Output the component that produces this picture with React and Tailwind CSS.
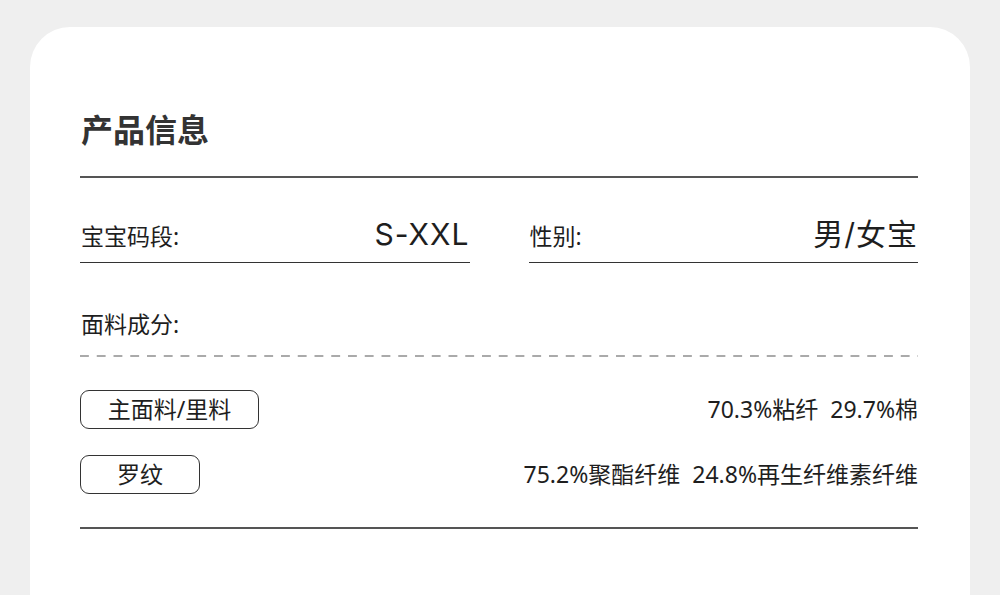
const font = "font-['Noto_Sans','Noto_Sans_CJK_SC',sans-serif]"

const Field = ({ label, value }) => (
  <div className="flex items-baseline justify-between border-b border-[#333] pb-[13px]">
    <span className="ml-px text-[23px] leading-none text-[#1e1e1e]">{label}</span>
    <span className="font-['Inter','Noto_Sans_CJK_SC',sans-serif] text-[30px] leading-none tracking-[1px] text-[#1e1e1e]">
      {value}
    </span>
  </div>
)

const Fabric = ({ tag, width, value }) => (
  <div className="flex items-center justify-between">
    <div
      className={`flex h-[39px] items-center justify-center rounded-[9px] border border-[#333] text-[23px] leading-none text-[#1e1e1e] ${width}`}
    >
      {tag}
    </div>
    <span className="text-[23px] leading-none text-[#1e1e1e] whitespace-pre">{value}</span>
  </div>
)

export default function App() {
  return (
    <div className={`h-[595px] overflow-hidden bg-[#efefef] px-[30px] pt-[27px] ${font}`}>
      <div className="h-full rounded-t-[40px] bg-white pl-[50px] pr-[52px] pt-[87px]">
        <h1 className="ml-px text-[32px] font-bold leading-none text-[#333]">产品信息</h1>
        <div className="mt-[30px] h-[2px] bg-[#555]" />

        <div className="mt-[41px] grid grid-cols-2 gap-[59px]">
          <Field label="宝宝码段:" value="S-XXL" />
          <Field label="性别:" value="男/女宝" />
        </div>

        <div className="ml-px mt-[50px] text-[23px] leading-none text-[#1e1e1e]">面料成分:</div>
        <div className="mt-[19px] h-[2px] bg-[linear-gradient(to_right,#aaa_9px,transparent_9px)] bg-[length:16.75px_2px]" />

        <div className="mt-[33px] flex flex-col gap-[26px]">
          <Fabric tag="主面料/里料" width="w-[179px]" value="70.3%粘纤  29.7%棉" />
          <Fabric tag="罗纹" width="w-[120px]" value="75.2%聚酯纤维  24.8%再生纤维素纤维" />
        </div>

        <div className="mt-[33px] h-[2px] bg-[#555]" />
      </div>
    </div>
  )
}
